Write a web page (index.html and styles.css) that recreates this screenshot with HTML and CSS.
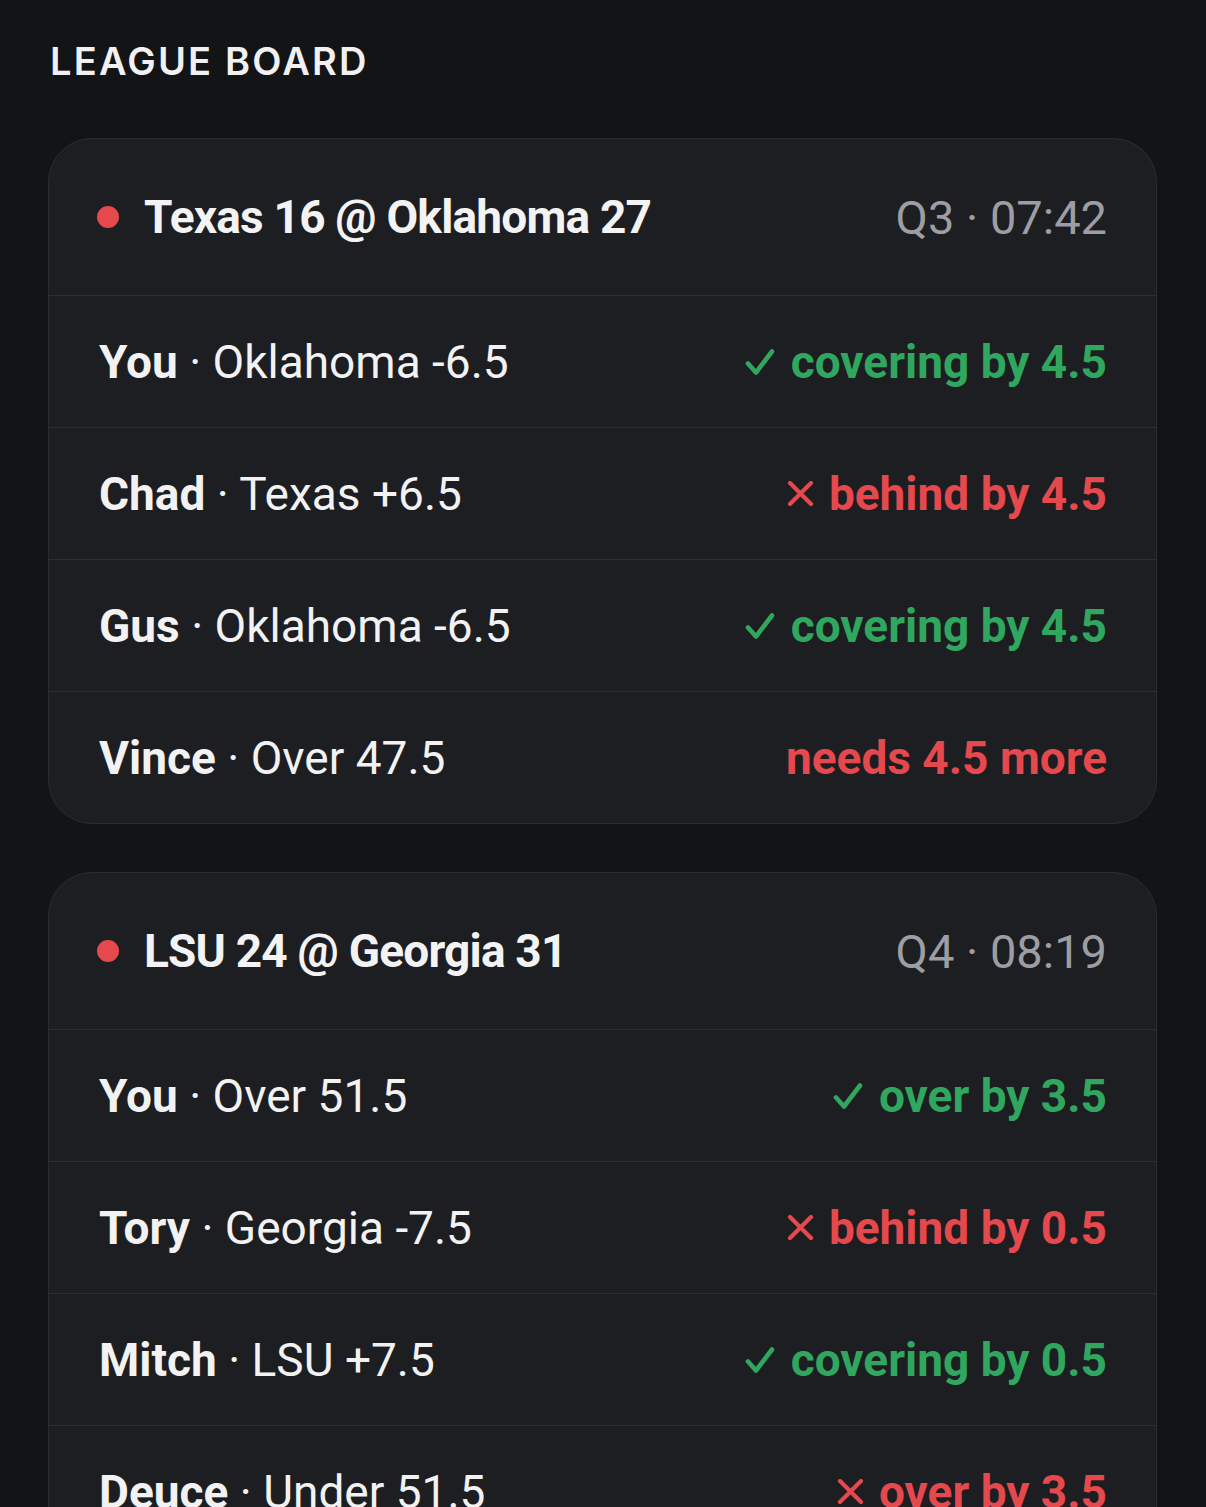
FILE: index.html
```html
<!DOCTYPE html>
<html lang="en">
<head>
<meta charset="utf-8">
<title>League Board</title>
<link rel="stylesheet" href="styles.css">
</head>
<body>
<main class="page">
  <h1 class="title">LEAGUE BOARD</h1>

  <section class="card">
    <header class="game">
      <div class="game-name"><span class="live-dot"></span>Texas 16 @ Oklahoma 27</div>
      <div class="clock">Q3 · 07:42</div>
    </header>
    <div class="row">
      <div class="pick"><b>You</b> · Oklahoma -6.5</div>
      <div class="status good"><svg class="ic-check" viewBox="0 0 30 28"><path d="M3 15.5 L11 24.5 L27 3.5"/></svg>covering by 4.5</div>
    </div>
    <div class="row">
      <div class="pick"><b>Chad</b> · Texas +6.5</div>
      <div class="status bad"><svg class="ic-x" viewBox="0 0 27 25"><path d="M3 2 L24 23 M24 2 L3 23"/></svg>behind by 4.5</div>
    </div>
    <div class="row">
      <div class="pick"><b>Gus</b> · Oklahoma -6.5</div>
      <div class="status good"><svg class="ic-check" viewBox="0 0 30 28"><path d="M3 15.5 L11 24.5 L27 3.5"/></svg>covering by 4.5</div>
    </div>
    <div class="row">
      <div class="pick"><b>Vince</b> · Over 47.5</div>
      <div class="status bad">needs 4.5 more</div>
    </div>
  </section>

  <section class="card">
    <header class="game">
      <div class="game-name"><span class="live-dot"></span>LSU 24 @ Georgia 31</div>
      <div class="clock">Q4 · 08:19</div>
    </header>
    <div class="row">
      <div class="pick"><b>You</b> · Over 51.5</div>
      <div class="status good"><svg class="ic-check" viewBox="0 0 30 28"><path d="M3 15.5 L11 24.5 L27 3.5"/></svg>over by 3.5</div>
    </div>
    <div class="row">
      <div class="pick"><b>Tory</b> · Georgia -7.5</div>
      <div class="status bad"><svg class="ic-x" viewBox="0 0 27 25"><path d="M3 2 L24 23 M24 2 L3 23"/></svg>behind by 0.5</div>
    </div>
    <div class="row">
      <div class="pick"><b>Mitch</b> · LSU +7.5</div>
      <div class="status good"><svg class="ic-check" viewBox="0 0 30 28"><path d="M3 15.5 L11 24.5 L27 3.5"/></svg>covering by 0.5</div>
    </div>
    <div class="row">
      <div class="pick"><b>Deuce</b> · Under 51.5</div>
      <div class="status bad"><svg class="ic-x" viewBox="0 0 27 25"><path d="M3 2 L24 23 M24 2 L3 23"/></svg>over by 3.5</div>
    </div>
  </section>
</main>
</body>
</html>
```

FILE: styles.css
```css
html, body {
  margin: 0;
  padding: 0;
  background: #131416;
}

body {
  font-family: Roboto, Inter, "Noto Sans", "Liberation Sans", sans-serif;
  color: #f2f2f3;
}

.page {
  padding: 38px 49px 40px 48px;
  display: flex;
  flex-direction: column;
  gap: 48px;
}

.title {
  margin: 0 0 6px 2px;
  font-family: Inter, Roboto, sans-serif;
  font-size: 38px;
  line-height: 46px;
  font-weight: 600;
  letter-spacing: 2.2px;
  color: #f1f1f2;
}

.card {
  background: #1d1e22;
  border: 1.5px solid #2b2d31;
  border-radius: 44px;
  overflow: hidden;
}

.game {
  height: 156px;
  display: flex;
  align-items: center;
  justify-content: space-between;
  padding: 0 49px 0 48px;
}

.game-name {
  display: flex;
  align-items: center;
  font-size: 46px;
  font-weight: 700;
  letter-spacing: -0.8px;
  color: #f3f3f4;
}

.live-dot {
  width: 22px;
  height: 22px;
  border-radius: 50%;
  background: #e5484d;
  margin-right: 25px;
  flex: none;
}

.clock {
  font-size: 47px;
  font-weight: 400;
  color: #9c9ea3;
}

.row {
  height: 131px;
  border-top: 1.5px solid #2d2f34;
  display: flex;
  align-items: center;
  justify-content: space-between;
  padding: 0 49px 0 50px;
}

.pick {
  font-size: 46px;
  font-weight: 400;
  color: #f2f2f3;
}

.pick b {
  font-weight: 700;
}

.status {
  display: flex;
  align-items: center;
  font-size: 46px;
  font-weight: 700;
}

.status.good {
  color: #30a75f;
}

.status.bad {
  color: #e5484d;
}

.status svg {
  fill: none;
  stroke: currentColor;
  stroke-linecap: round;
  stroke-linejoin: round;
}

.ic-check {
  width: 30px;
  height: 28px;
  stroke-width: 4.6;
  margin-right: 16px;
}

.ic-x {
  width: 27px;
  height: 25px;
  stroke-width: 4.2;
  margin-right: 15px;
}
```
